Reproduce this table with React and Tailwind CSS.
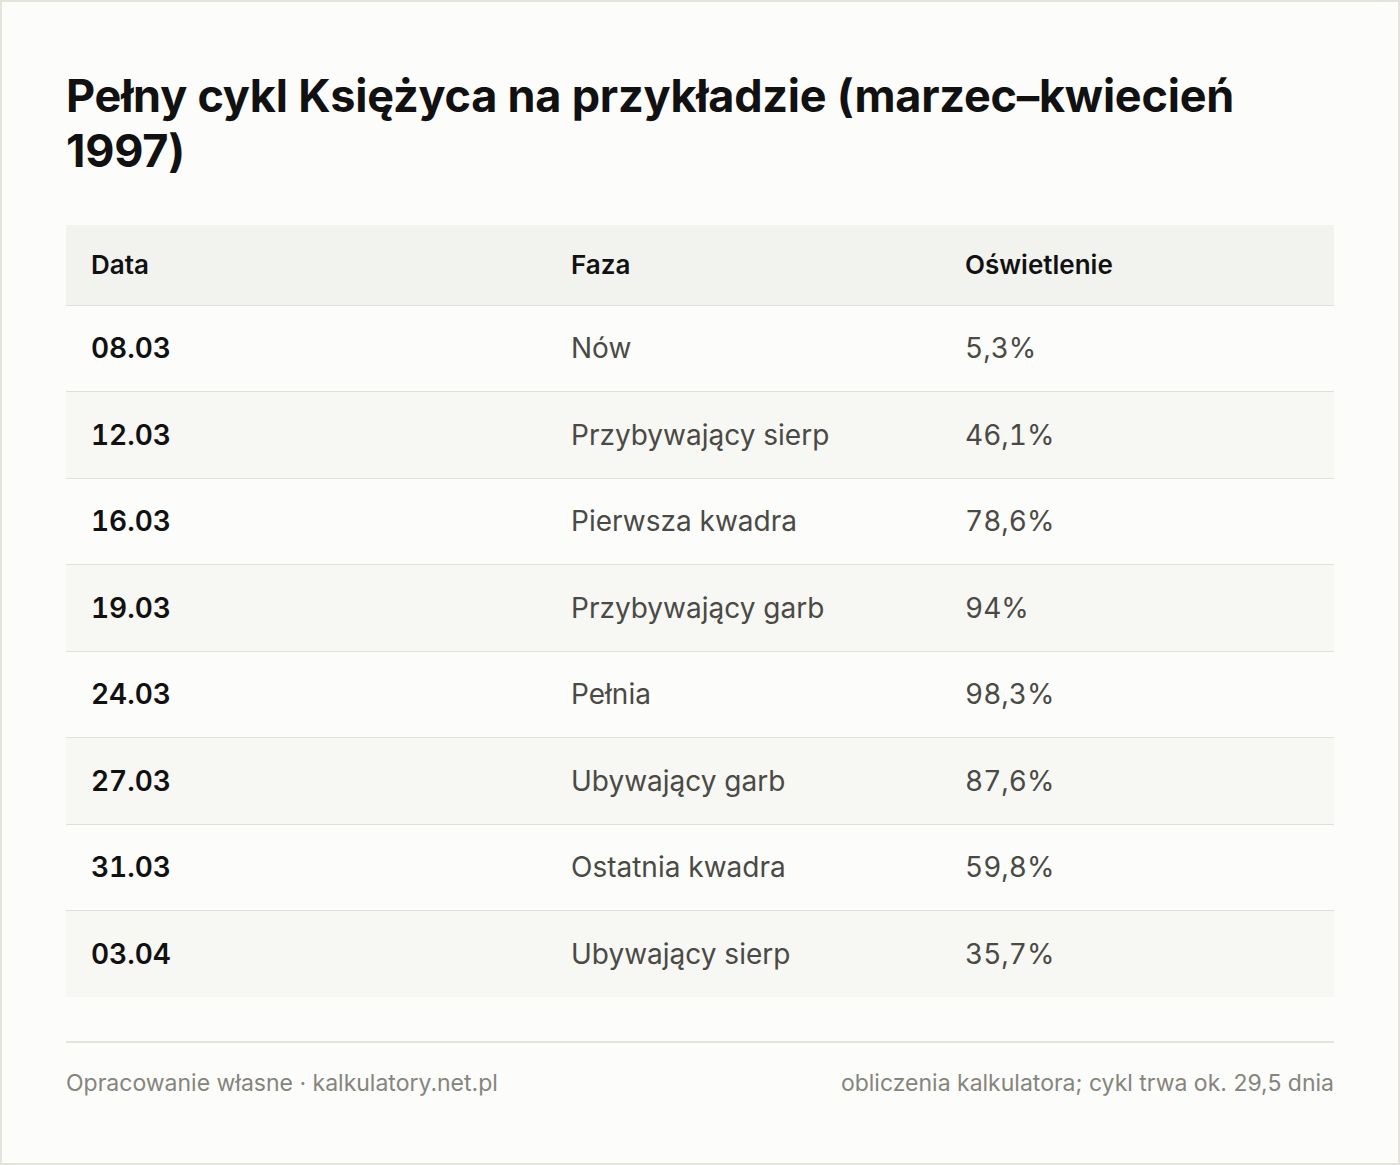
import React from "react";

const rows = [
  ["08.03", "Nów", "5,3%"],
  ["12.03", "Przybywający sierp", "46,1%"],
  ["16.03", "Pierwsza kwadra", "78,6%"],
  ["19.03", "Przybywający garb", "94%"],
  ["24.03", "Pełnia", "98,3%"],
  ["27.03", "Ubywający garb", "87,6%"],
  ["31.03", "Ostatnia kwadra", "59,8%"],
  ["03.04", "Ubywający sierp", "35,7%"],
];

export default function App() {
  return (
    <div
      className="w-[1400px] h-[1165px] bg-[#fcfcfa] border-2 border-[#e4e4dc] px-[64px] pt-[66px] text-[#111111]"
      style={{ fontFamily: "Inter, 'Noto Sans', sans-serif" }}
    >
      <h1 className="text-[45px] leading-[55px] font-bold tracking-[-0.005em] pr-[40px]">
        Pełny cykl Księżyca na przykładzie (marzec–kwiecień 1997)
      </h1>

      <table className="w-full mt-[47px] border-collapse">
        <thead>
          <tr className="bg-[#f2f2ee] border-b border-[#e0e0d8] h-[80px]">
            <th className="w-[480px] text-left font-semibold text-[26px] pl-[25px]">Data</th>
            <th className="w-[394px] text-left font-semibold text-[26px] pl-[25px]">Faza</th>
            <th className="text-left font-semibold text-[26px] pl-[25px]">Oświetlenie</th>
          </tr>
        </thead>
        <tbody>
          {rows.map((r, i) => (
            <tr
              key={r[0]}
              className={
                "h-[86.5px] border-b border-[#e0e0d8] last:border-b-0 " +
                (i % 2 === 1 ? "bg-[#f7f7f4]" : "")
              }
            >
              <td className="pl-[25px] text-[28px] font-semibold text-[#111111] tabular-nums">{r[0]}</td>
              <td className="pl-[25px] text-[28px] text-[#4a4a45]">{r[1]}</td>
              <td className="pl-[25px] text-[28px] text-[#4a4a45] tabular-nums">{r[2]}</td>
            </tr>
          ))}
        </tbody>
      </table>

      <div className="mt-[44px] border-t-2 border-[#e4e4dc] pt-[24px] flex justify-between text-[23px] leading-[32px] text-[#85857d]">
        <span>Opracowanie własne · kalkulatory.net.pl</span>
        <span>obliczenia kalkulatora; cykl trwa ok. 29,5 dnia</span>
      </div>
    </div>
  );
}
